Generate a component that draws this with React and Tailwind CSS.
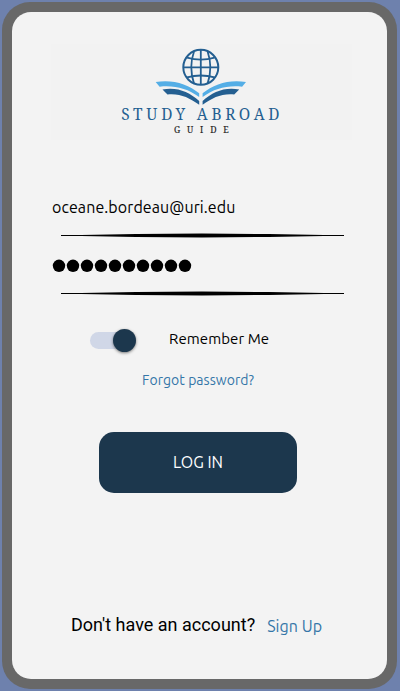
function Logo() {
  return (
    <svg className="block h-24 w-[301px]" viewBox="51 44 301 96" aria-label="Study Abroad Guide">
      <g fill="none" stroke="#245f91" strokeWidth="1.8">
        <circle cx="200.800" cy="67.300" r="17.500" strokeWidth="2" />
        <path d="M200.800 50V85M183.300 67.300H218.300" />
        <path d="M194 51.500Q188.500 67.300 194 83.500M207.600 51.500Q213.100 67.300 207.600 83.500" />
        <path d="M187 57.700Q200.800 61.500 214.600 57.700M187 77.400Q200.800 73.600 214.600 77.400" />
      </g>
      <path fill="#54aee6" d="M155.700 82C172 79 188 84 199.200 93.200V97C187 88.500 175 85.200 159.600 86.700ZM246 82C229.700 79 214 84 202.600 93.200V97C214.700 88.500 226.700 85.200 242.100 86.700Z" />
      <path fill="#245f91" d="M162.500 89.600C177 86.800 189 92 199.200 101V104.800C189 97.500 180 93.200 167.500 94.400ZM239.200 89.600C224.700 86.800 212.700 92 202.600 101V104.800C212.700 97.500 221.700 93.200 234.200 94.400Z" />
      <text x="0" y="0" fill="#245f91" fontSize="16.800" textLength="172" className="font-['Noto_Serif','Liberation_Serif',serif]" transform="translate(121.300 120) scale(.92 1)">STUDY ABROAD</text>
      <text x="0" y="0" fill="#222" stroke="#222" strokeWidth="0.15" fontSize="9.500" textLength="59.500" className="font-['Noto_Serif','Liberation_Serif',serif]" transform="translate(174 133) scale(.92 1)">GUIDE</text>
    </svg>
  );
}

function Divider({ className }) {
  return (
    <svg className={`ml-[49px] block h-[5px] w-[283px] ${className}`} viewBox="0 0 283 5">
      <path d="M0 2.100H20L75 1.100L141 0.500L208 1.100L263 2.100H283V2.900H263L208 3.900L141 4.500L75 3.900L20 2.900H0Z" />
    </svg>
  );
}

export default function App() {
  return (
    <div className="h-[691px] w-[400px] bg-[#6e81ad] pl-0.5 pt-0.5 font-['Ubuntu','Noto_Sans',sans-serif] text-black">
      <div className="h-[687px] w-[395px] rounded-[28px] bg-[#686868] p-2.5">
        <main className="flex h-[667px] w-[375px] flex-col overflow-hidden rounded-[19px] bg-[#f3f3f3]">
          <div className="ml-[39px] mt-8 w-[301px] bg-[#f2f2f2]"><Logo /></div>
          <div className="ml-10 mt-[55px] h-6 whitespace-nowrap text-base leading-6 tracking-[0.09px]">oceane.bordeau@uri.edu</div>
          <Divider className="mt-3.5" />
          <svg className="ml-10 mt-5 block h-4 w-[142px]" viewBox="0 0 142 16" aria-label="Password">
            {Array.from({ length: 10 }, (_, i) => <circle key={i} cx={7 + i * 14} cy="7.800" r="6.200" />)}
          </svg>
          <Divider className="mt-[17px]" />
          <div className="ml-[78px] mt-[33px] flex h-[23px] items-center">
            <div className="flex h-[17px] w-[46px] items-center justify-end rounded-full bg-linear-to-r from-[#d0d7e7] from-90% to-transparent to-90%">
              <span className="size-[23px] shrink-0 rounded-full bg-[#1c374d] shadow-[0_1px_3px_rgba(0,0,0,0.5)]" />
            </div>
            <span className="ml-[33px] -mt-[3px] whitespace-nowrap text-[15px] leading-5 tracking-[0.08px]">Remember Me</span>
          </div>
          <a className="ml-[130px] mt-[18px] h-5 self-start whitespace-nowrap text-sm leading-5 tracking-[0.05px] text-[#3476a8]">Forgot password?</a>
          <button className="ml-[87px] mt-[42px] h-[61px] w-[198px] rounded-[15px] bg-[#1c374d] pb-0.5 text-base text-white">LOG IN</button>
          <div className="ml-[59px] mt-[119px] flex h-[26px] items-center whitespace-nowrap">
            <span className="font-['Roboto',sans-serif] text-lg leading-6">Don't have an account?</span>
            <a className="ml-3 mt-0.5 text-base leading-6 tracking-[0.08px] text-[#3476a8]">Sign Up</a>
          </div>
        </main>
      </div>
    </div>
  );
}
